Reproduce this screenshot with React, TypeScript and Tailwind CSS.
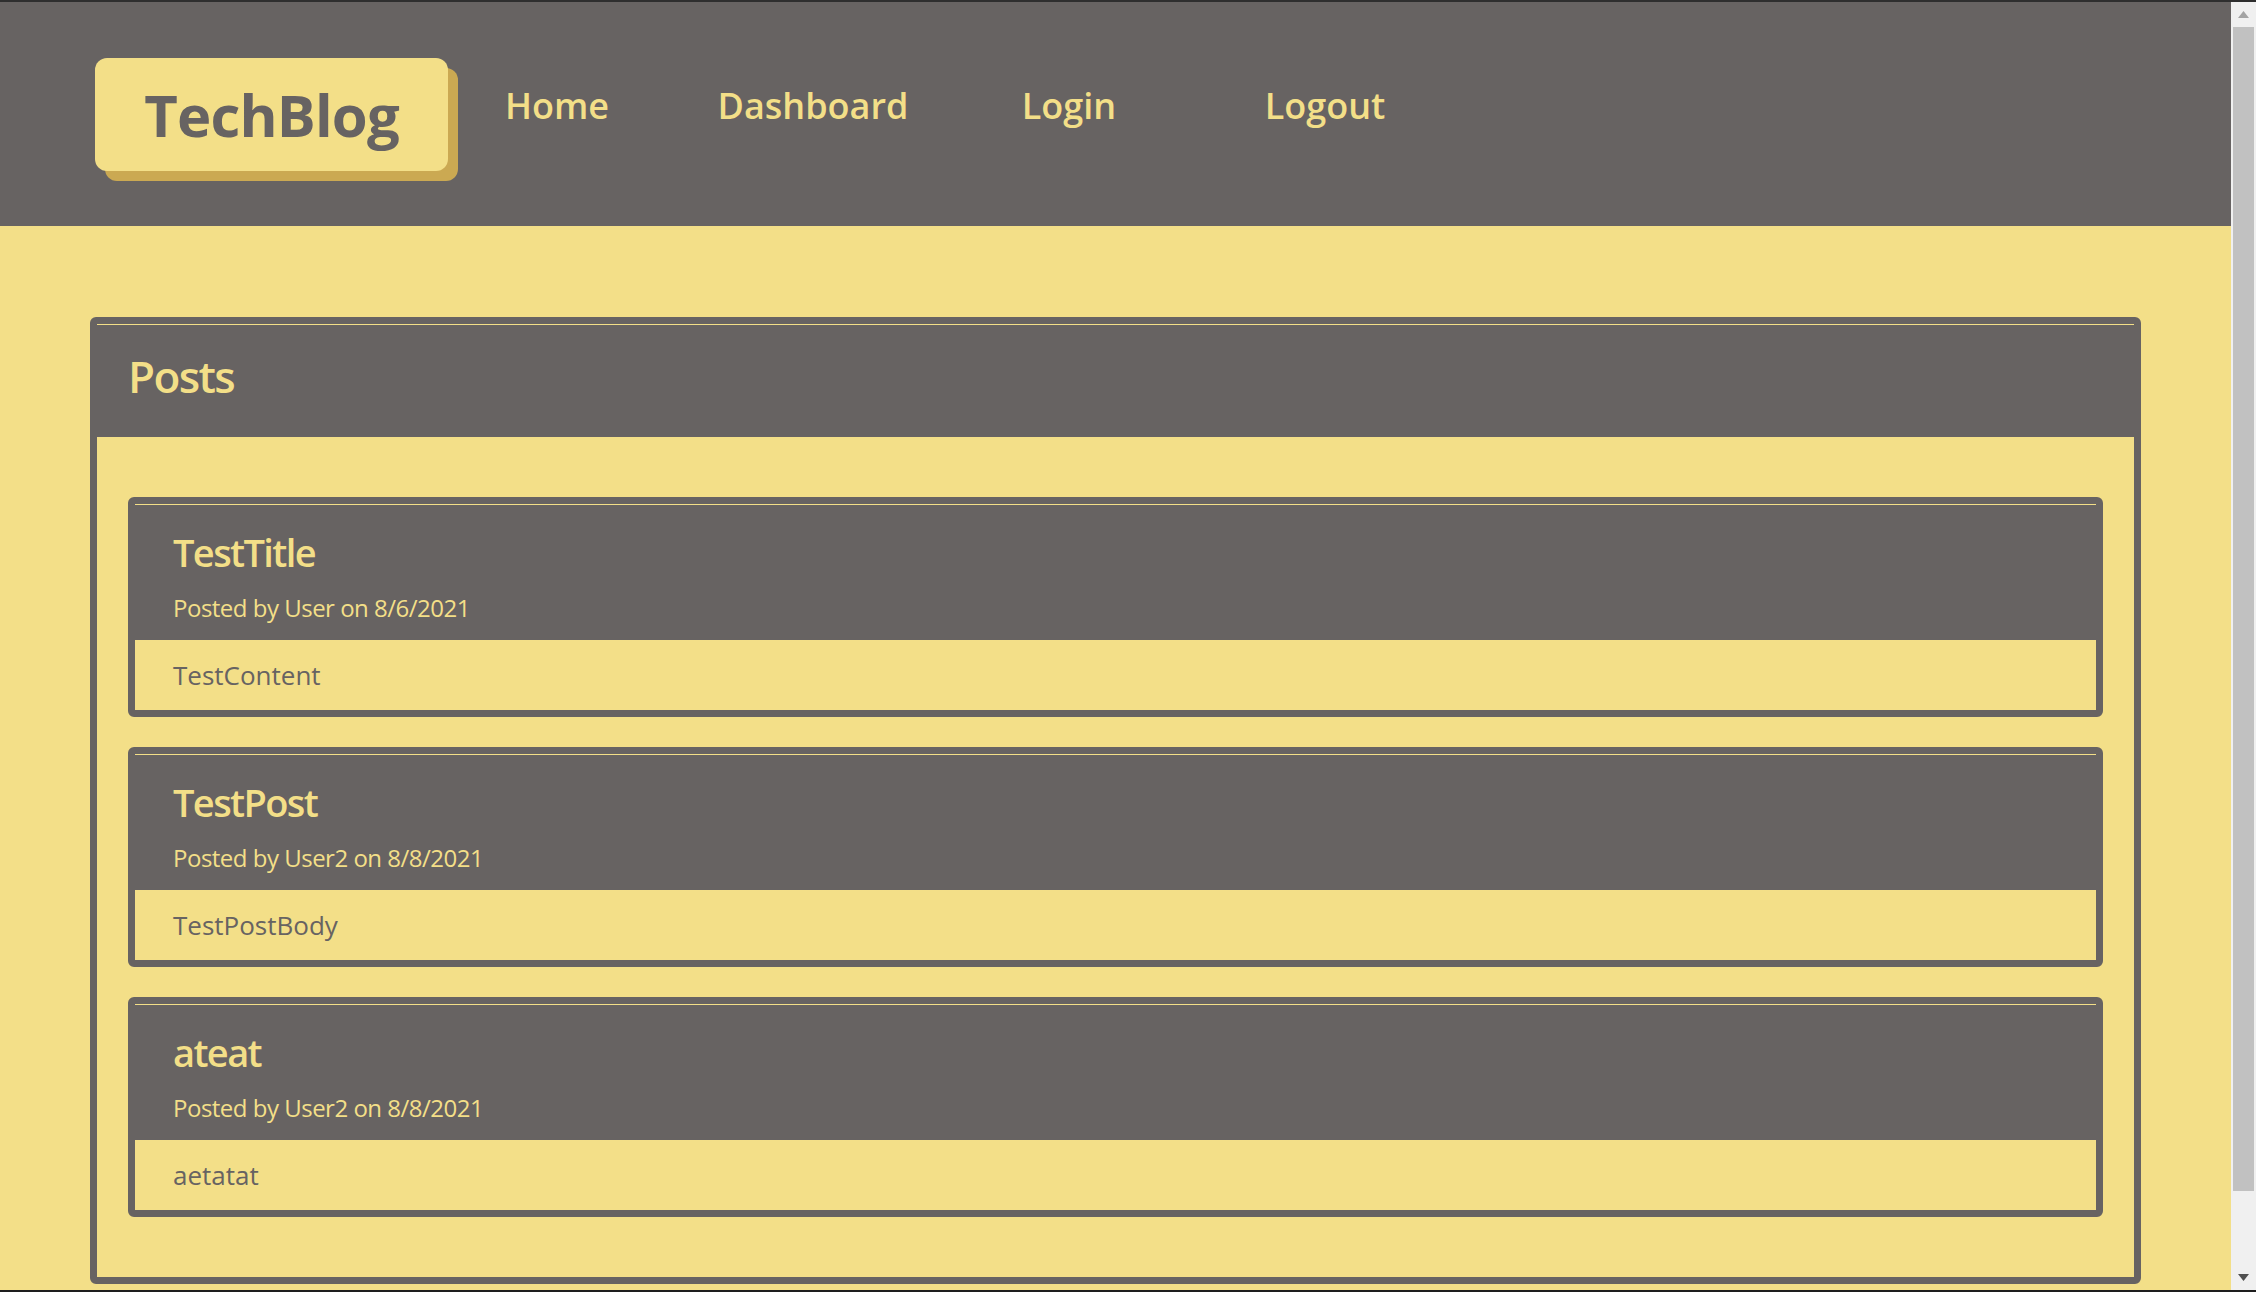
import React from "react";

const posts = [
  { title: "TestTitle", author: "User", date: "8/6/2021", body: "TestContent" },
  { title: "TestPost", author: "User2", date: "8/8/2021", body: "TestPostBody" },
  { title: "ateat", author: "User2", date: "8/8/2021", body: "aetatat" },
];

const navItems = ["Home", "Dashboard", "Login", "Logout"];

export default function App() {
  return (
    <div
      className="w-full h-[1292px] overflow-hidden flex flex-col bg-[#1e1e1e]"
      style={{ fontFamily: '"Open Sans", "Noto Sans", sans-serif' }}
    >
      <div className="h-[2px] bg-[#2e2e2e] shrink-0" />
      <div className="flex flex-1 min-h-0">
        <div className="flex-1 min-w-0 overflow-hidden bg-[#f3df88]">
          <header className="h-[224px] bg-[#676362] flex items-start">
            <div className="ml-[95px] mt-[56px] w-[353px] h-[113px] rounded-[12px] bg-[#f3df88] shadow-[10px_10px_0_#cba952] pt-[28px] text-center shrink-0">
              <span className="text-[58px] leading-none font-bold text-[#676362] tracking-[-0.8px]">
                TechBlog
              </span>
            </div>
            <nav className="flex ml-[-19px] mt-[86px]">
              {navItems.map((n) => (
                <a
                  key={n}
                  className="w-[256px] text-center text-[36px] leading-none font-semibold text-[#f3df88] cursor-pointer"
                >
                  {n}
                </a>
              ))}
            </nav>
          </header>
          <main className="px-[90px] pt-[91px]">
            <section className="border-[7px] border-[#676362] rounded-[6px] overflow-hidden">
              <div className="h-[113px] bg-[#676362] border-t border-[#f3df88] pl-[31px] pt-[29px]">
                <h2 className="text-[44px] leading-none font-semibold text-[#f3df88] tracking-[-1.6px]">
                  Posts
                </h2>
              </div>
              <div className="px-[31px] py-[60px] flex flex-col gap-[30px]">
                {posts.map((p) => (
                  <article
                    key={p.title}
                    className="border-[7px] border-[#676362] rounded-[6px] overflow-hidden"
                  >
                    <div className="h-[136px] bg-[#676362] border-t border-[#f3df88] pl-[38px] pt-[28px]">
                      <h3 className="text-[38px] leading-none font-semibold text-[#f3df88] tracking-[-1.6px]">
                        {p.title}
                      </h3>
                      <p className="mt-[25px] text-[24px] leading-none text-[#f3df88] tracking-[-0.5px]">
                        Posted by {p.author} on {p.date}
                      </p>
                    </div>
                    <div className="h-[70px] pl-[38px] pt-[22px]">
                      <p className="text-[26px] leading-none text-[#676362]">{p.body}</p>
                    </div>
                  </article>
                ))}
              </div>
            </section>
          </main>
        </div>
        <div className="w-[25px] shrink-0 bg-[#f0f0f0] flex flex-col items-center">
          <div className="h-[25px] w-full flex items-center justify-center">
            <svg width="11" height="7" viewBox="0 0 11 7">
              <polygon points="5.5,0 11,7 0,7" fill="#a3a3a3" />
            </svg>
          </div>
          <div className="w-[21px] h-[1164px] bg-[#c1c1c1]" />
          <div className="flex-1" />
          <div className="h-[25px] w-full flex items-center justify-center">
            <svg width="11" height="7" viewBox="0 0 11 7">
              <polygon points="0,0 11,0 5.5,7" fill="#505050" />
            </svg>
          </div>
        </div>
      </div>
      <div className="h-[2px] bg-[#1e1e1e] shrink-0" />
    </div>
  );
}
